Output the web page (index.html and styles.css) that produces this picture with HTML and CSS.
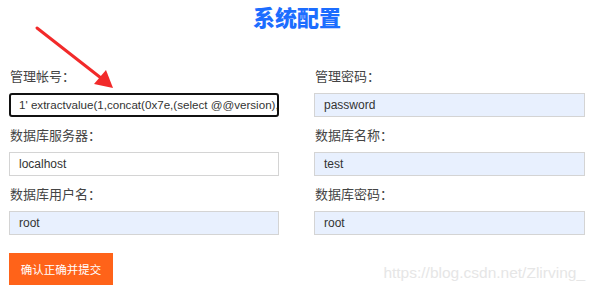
FILE: index.html
```html
<!DOCTYPE html>
<html lang="zh">
<head>
<meta charset="utf-8">
<link rel="stylesheet" href="styles.css">
</head>
<body>
<div class="page">
  <h1 class="title">系统配置</h1>
  <div class="grid">
    <div class="field">
      <div class="label">管理帐号：</div>
      <div class="input focus">1' extractvalue(1,concat(0x7e,(select @@version),0x7e))</div>
    </div>
    <div class="field">
      <div class="label">管理密码：</div>
      <div class="input filled">password</div>
    </div>
    <div class="field">
      <div class="label">数据库服务器：</div>
      <div class="input">localhost</div>
    </div>
    <div class="field">
      <div class="label">数据库名称：</div>
      <div class="input filled">test</div>
    </div>
    <div class="field">
      <div class="label">数据库用户名：</div>
      <div class="input filled">root</div>
    </div>
    <div class="field">
      <div class="label">数据库密码：</div>
      <div class="input filled">root</div>
    </div>
  </div>
  <div class="footer">
    <button class="submit">确认正确并提交</button>
    <span class="watermark">https://blog.csdn.net/Zlirving_</span>
  </div>
  <svg class="arrow" width="120" height="95" viewBox="0 0 120 95">
    <line x1="37" y1="28" x2="101" y2="78" stroke="#f22a2a" stroke-width="3" stroke-linecap="round"/>
    <polygon points="113,88 94,84 106,70" fill="#f22a2a"/>
  </svg>
</div>
</body>
</html>
```
FILE: styles.css
```css
* { box-sizing: border-box; }
html, body { margin: 0; padding: 0; background: #fff; }
body {
  width: 595px;
  height: 292px;
  overflow: hidden;
  font-family: "Liberation Sans", "Noto Sans CJK SC", sans-serif;
  color: #333;
}
.page {
  position: relative;
  padding: 2px 10px 0 9px;
}
.title {
  margin: 0;
  text-align: center;
  font-size: 22px;
  line-height: 28px;
  font-weight: 900;
  color: #1c6dff;
  font-family: "Noto Sans CJK SC", sans-serif;
}
.grid {
  display: grid;
  grid-template-columns: 270px 271px;
  column-gap: 35px;
  margin-top: 36px;
}
.field { margin-bottom: 8px; }
.label {
  font-family: "Noto Sans CJK SC", sans-serif;
  font-size: 13px;
  line-height: 20px;
  color: #444;
  margin-bottom: 7px;
  padding-left: 1px;
}
.input {
  height: 24px;
  border: 1px solid #d4d4d4;
  background: #fff;
  font-size: 12px;
  line-height: 22px;
  padding-left: 9px;
  white-space: nowrap;
  overflow: hidden;
  color: #333;
}
.input.filled { background: #e8f0fe; }
.input.focus {
  border: 2px solid #111;
  border-radius: 3px;
  line-height: 20px;
  padding-left: 8px;
  font-size: 11.6px;
}
.footer {
  display: flex;
  align-items: center;
  justify-content: space-between;
  margin-top: 10px;
}
.submit {
  width: 104px;
  height: 32px;
  border: none;
  background: #ff6319;
  color: #fff;
  font-family: "Noto Sans CJK SC", sans-serif;
  font-size: 11.5px;
  padding: 0;
}
.watermark {
  font-size: 15.5px;
  color: #e6e6e6;
  margin-top: 8px;
}
.arrow {
  position: absolute;
  left: 0;
  top: 0;
}
```
